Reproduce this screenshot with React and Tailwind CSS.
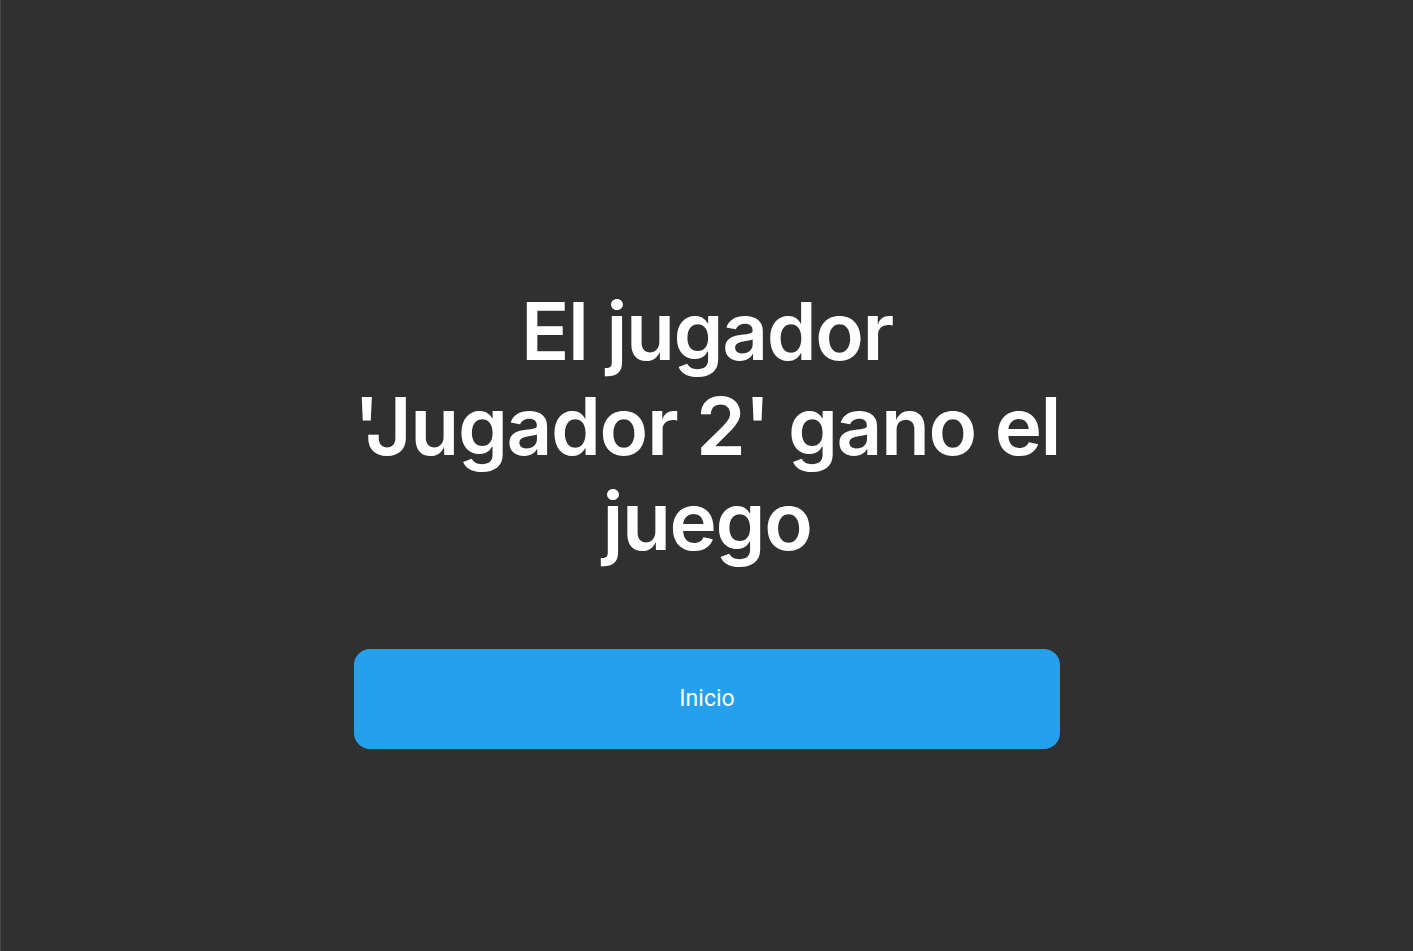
import React from 'react';

const App = () => {
  return (
    <div className="min-h-screen w-full bg-[#303030] border-l border-[#474747] flex flex-col items-center pt-[283px]">
      <div className="w-[706px] flex flex-col items-center">
        <h1
          className="w-[760px] text-center text-white text-[80px] leading-[95px] font-semibold tracking-[-1.4px]"
          style={{ fontFamily: 'Inter, "Noto Sans", sans-serif' }}
        >
          El jugador
          <br />
          'Jugador 2' gano el
          <br />
          juego
        </h1>
        <button
          className="mt-[81px] w-full h-[100px] rounded-2xl bg-[#25a0ec] text-white text-[23px]"
          style={{ fontFamily: 'Roboto, "Noto Sans", sans-serif' }}
        >
          Inicio
        </button>
      </div>
    </div>
  );
};

export default App;
